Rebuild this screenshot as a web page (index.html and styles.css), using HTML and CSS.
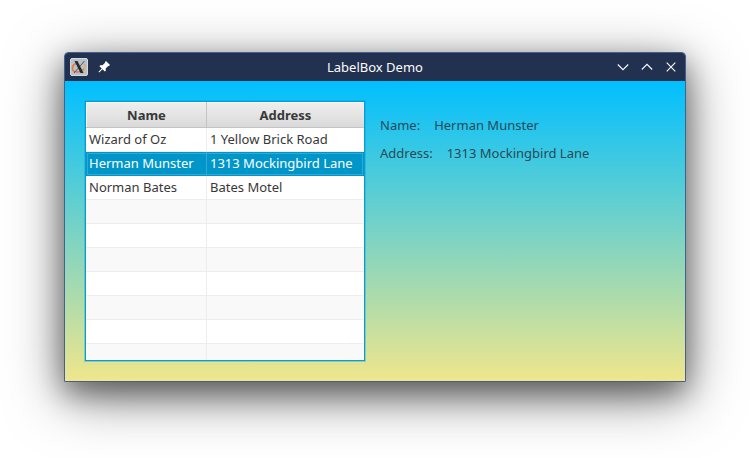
FILE: index.html
```html
<!DOCTYPE html>
<html lang="en">
<head>
<meta charset="utf-8">
<title>LabelBox Demo</title>
<link rel="stylesheet" href="styles.css">
</head>
<body>
<main class="window">
  <header class="titlebar">
    <div class="left">
      <svg class="app" width="18" height="18" viewBox="0 0 18 18">
        <rect x=".5" y=".5" width="17" height="17" rx="1.5" fill="#b9c2ca" stroke="#d3dae0"/>
        <path d="M6 5.500C2 7 1 12 4.500 13.500C8 14.500 12 13 14 11" fill="none" stroke="#e9743f" stroke-width="1.5"/>
        <path d="M12 5.500C16 6 16.500 10 13 13" fill="none" stroke="#e8a667" stroke-width="1.1"/>
        <path d="M14.500 3L4 15" stroke="#555b5e" stroke-width="1"/>
        <path d="M4.500 3H7.500L13.500 15H10.500Z" fill="#25292c"/>
      </svg>
      <svg width="12" height="12" viewBox="0 0 12 12">
        <path d="M8 0L12 4L10.900 5L10.200 4.900L7.700 7.500L7.800 9.800L6.800 10.600L4.500 8.200L1.200 11.500L.5 10.800L3.800 7.500L1.400 5.200L2.200 4.200L4.500 4.300L7.100 1.800L7 1.100Z" fill="#fff"/>
      </svg>
    </div>
    <h1 class="title">LabelBox Demo</h1>
    <div class="right">
      <svg width="12" height="12" viewBox="0 0 12 12"><path d="M.8 3.500L6 8.700L11.200 3.500"/></svg>
      <svg width="12" height="12" viewBox="0 0 12 12"><path d="M.8 8.500L6 3.300L11.200 8.500"/></svg>
      <svg width="12" height="12" viewBox="0 0 12 12"><path d="M1.700 1.700L10.300 10.300M10.300 1.700L1.700 10.300"/></svg>
    </div>
  </header>
  <section class="content">
    <div class="table">
      <div class="row head"><span>Name</span><span>Address</span></div>
      <div class="row"><span>Wizard of Oz</span><span>1 Yellow Brick Road</span></div>
      <div class="row selected"><span>Herman Munster</span><span>1313 Mockingbird Lane</span></div>
      <div class="row"><span>Norman Bates</span><span>Bates Motel</span></div>
      <div class="row odd"><span></span><span></span></div>
      <div class="row"><span></span><span></span></div>
      <div class="row odd"><span></span><span></span></div>
      <div class="row"><span></span><span></span></div>
      <div class="row odd"><span></span><span></span></div>
      <div class="row"><span></span><span></span></div>
      <div class="row odd"><span></span><span></span></div>
    </div>
    <div class="details">
      <div class="field"><span>Name:</span><span>Herman Munster</span></div>
      <div class="field"><span>Address:</span><span>1313 Mockingbird Lane</span></div>
    </div>
  </section>
</main>
</body>
</html>
```
FILE: styles.css
```css
* { box-sizing: border-box; }
body {
  margin: 0;
  height: 458px;
  padding: 52px 64px 0;
  overflow: hidden;
  background: #fff;
  font: 13px/24px "Noto Sans", sans-serif;
  color: #383838;
}
.window {
  width: 622px;
  height: 330px;
  border: 1px solid #41618f;
  border-radius: 4px 4px 0 0;
  box-shadow: 0 14px 56px rgba(0,0,0,.5), 0 11px 28px rgba(0,0,0,.4);
}
.titlebar {
  display: grid;
  grid-template-columns: 1fr auto 1fr;
  align-items: center;
  height: 28px;
  padding: 0 8px 0 5px;
  border-radius: 3px 3px 0 0;
  background: #21314f;
}
.left { display: flex; align-items: center; gap: 10px; }
.title { margin: 0; padding-left: 3px; font-size: 13px; font-weight: 400; line-height: 28px; color: #fcfcfc; }
.right { display: flex; justify-content: flex-end; gap: 12px; fill: none; stroke: #fcfcfc; stroke-width: 1.100; }
.content {
  display: flex;
  align-items: flex-start;
  gap: 15px;
  height: 300px;
  padding: 20px;
  background: linear-gradient(#00bfff, #f0e68c);
}
.table {
  width: 280px;
  height: 260px;
  border: 1px solid #039ed3;
  box-shadow: 0 0 0 1px rgba(3,158,211,.35);
  background: #fff;
  overflow: hidden;
}
.row { display: grid; grid-template-columns: 121px 157px; height: 24px; }
.row span {
  padding-left: 3px;
  line-height: 23px;
  border-right: 1px solid #ededed;
  border-bottom: 1px solid #ededed;
  white-space: nowrap;
}
.row span:last-child { border-right-color: transparent; }
.odd { background: #f9f9f9; }
.head {
  height: 26px;
  background: linear-gradient(#efefef, #d9d9d9);
  box-shadow: inset 1px 1px #fafafa;
  font-weight: 700;
  text-align: center;
}
.head span { padding: 1px 0 0 1px; line-height: 24px; border-color: #c3c3c3; }
.selected {
  background: #0096c9;
  color: #fff;
  box-shadow: inset 0 0 0 1px #0096c9, inset 0 0 0 2px #30aad4;
}
.selected span { border-right-color: #30aad4; border-bottom-color: transparent; }
.details { padding-top: 12px; }
.field { display: flex; gap: 14px; height: 28px; color: #264a57; }
```
